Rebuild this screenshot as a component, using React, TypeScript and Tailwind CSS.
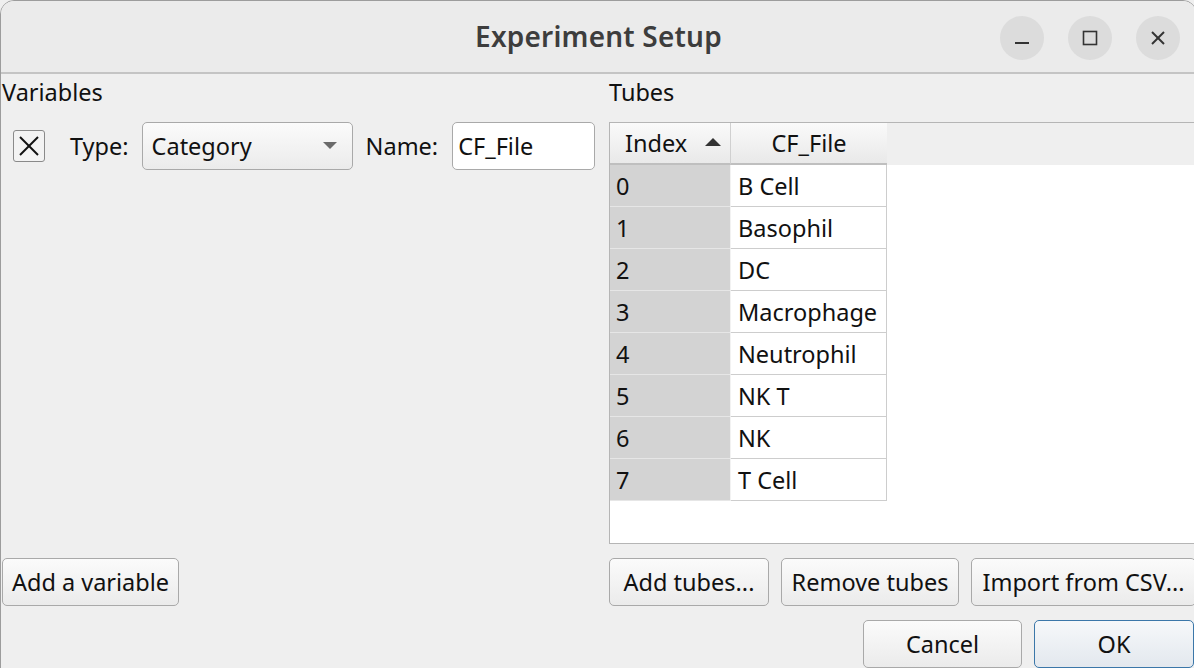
import React from 'react';

const tubes = ['B Cell', 'Basophil', 'DC', 'Macrophage', 'Neutrophil', 'NK T', 'NK', 'T Cell'];

const btn =
  'h-[48px] pt-[1px] rounded-[5px] border border-[#a9a9a9] bg-gradient-to-b from-[#fbfbfb] to-[#ebebeb] text-[23.5px] text-[#111] flex items-center justify-center';

const WinButton: React.FC<{ children: React.ReactNode }> = ({ children }) => (
  <div className="w-[44px] h-[44px] rounded-full bg-[#dcdcdc] flex items-center justify-center">{children}</div>
);

const App: React.FC = () => (
  <div className="w-[1194px] h-[668px] overflow-hidden bg-[#efefef]" style={{ fontFamily: '"Noto Sans", "DejaVu Sans", sans-serif' }}>
    <div className="w-[1197px] h-[700px] rounded-t-[14px] border border-[#9c9c9c] bg-[#efefef] overflow-hidden">
      {/* title bar */}
      <div className="h-[73px] bg-[#ebebeb] border-b-2 border-[#c4c4c4] relative flex items-center justify-center">
        <span className="text-[28px] font-semibold text-[#3d3d3d] tracking-[0.2px] -mt-[1px]">Experiment Setup</span>
        <div className="absolute right-[16px] top-[15px] flex gap-[24px]">
          <WinButton>
            <svg width="16" height="16" viewBox="0 0 16 16">
              <line x1="1" y1="13" x2="15" y2="13" stroke="#333" strokeWidth="2" />
            </svg>
          </WinButton>
          <WinButton>
            <svg width="16" height="16" viewBox="0 0 16 16">
              <rect x="1.5" y="1.5" width="13" height="13" fill="none" stroke="#333" strokeWidth="1.6" />
            </svg>
          </WinButton>
          <WinButton>
            <svg width="16" height="16" viewBox="0 0 16 16">
              <line x1="2" y1="2" x2="14" y2="14" stroke="#333" strokeWidth="2" />
              <line x1="14" y1="2" x2="2" y2="14" stroke="#333" strokeWidth="2" />
            </svg>
          </WinButton>
        </div>
      </div>

      {/* body */}
      <div className="flex h-[532px] text-[23.5px] text-[#111]">
        {/* variables */}
        <div className="w-[608px] flex flex-col pl-[1px]">
          <div className="h-[32px] leading-[32px] mt-[2px]">Variables</div>
          <div className="mt-[14px] h-[48px] flex items-center">
            <div className="ml-[11px] w-[32px] h-[32px] border border-[#8a8a8a] rounded-[3px] bg-[#f3f3f3] flex items-center justify-center">
              <svg width="24" height="24" viewBox="0 0 24 24">
                <line x1="3" y1="3" x2="21" y2="21" stroke="#111" strokeWidth="2" />
                <line x1="21" y1="3" x2="3" y2="21" stroke="#111" strokeWidth="2" />
              </svg>
            </div>
            <span className="ml-[25px] pt-[2px]">Type:</span>
            <div className="ml-[13px] w-[211px] h-[48px] rounded-[5px] border border-[#a9a9a9] bg-gradient-to-b from-[#fbfbfb] to-[#ebebeb] flex items-center justify-between pl-[9px] pr-[15px]">
              <span className="pt-[2px]">Category</span>
              <svg width="14" height="8" viewBox="0 0 14 8">
                <polygon points="0,0 14,0 7,7" fill="#6b6b6b" />
              </svg>
            </div>
            <span className="ml-[13px] pt-[2px]">Name:</span>
            <div className="ml-[14px] w-[143px] h-[48px] pt-[2px] rounded-[5px] border border-[#a9a9a9] bg-white flex items-center pl-[5px]">CF_File</div>
          </div>
          <div className="flex-1" />
          <div className="flex">
            <button className={`${btn} w-[177px]`}>Add a variable</button>
          </div>
        </div>

        {/* tubes */}
        <div className="flex-1 flex flex-col">
          <div className="h-[32px] leading-[32px] mt-[2px]">Tubes</div>
          <div className="mt-[14px] flex-1 border border-[#b5b5b5] bg-white">
            <div className="flex h-[42px] bg-[#efefef]">
              <div className="w-[121px] h-[42px] pt-[2px] border-r border-r-[#d0d0d0] border-b-2 border-b-[#bfbfbf] bg-gradient-to-b from-[#fafafa] to-[#e9e9e9] flex items-center pl-[15px] pr-[9px] justify-between">
                <span>Index</span>
                <svg width="16" height="9" viewBox="0 0 16 9" className="-mt-[4px]">
                  <polygon points="0,8 16,8 8,0" fill="#333" />
                </svg>
              </div>
              <div className="w-[156px] h-[42px] pt-[2px] border-b-2 border-b-[#bfbfbf] bg-gradient-to-b from-[#fafafa] to-[#e9e9e9] flex items-center justify-center">
                CF_File
              </div>
            </div>
            {tubes.map((t, i) => (
              <div key={t} className="flex h-[42px]">
                <div className="w-[121px] pt-[2px] bg-[#d3d3d3] border-b border-b-[#e6e6e6] border-r border-r-[#f2f2f2] flex items-center pl-[6px]">{i}</div>
                <div className="w-[156px] pt-[2px] border-b border-r border-[#cdcdcd] flex items-center pl-[7px]">{t}</div>
              </div>
            ))}
          </div>
          <div className="mt-[14px] flex gap-[12px]">
            <button className={`${btn} w-[160px]`}>Add tubes...</button>
            <button className={`${btn} w-[178px]`}>Remove tubes</button>
            <button className={`${btn} w-[225px]`}>Import from CSV...</button>
          </div>
        </div>
      </div>

      {/* dialog buttons */}
      <div className="mt-[14px] flex justify-end gap-[12px] pr-[2px]">
        <button className={`${btn} w-[159px]`}>Cancel</button>
        <button className="w-[160px] h-[48px] pt-[1px] rounded-[5px] border border-[#3b77a9] bg-gradient-to-b from-[#f6f8fa] to-[#e3e8ee] text-[23.5px] text-[#111] flex items-center justify-center">OK</button>
      </div>
    </div>
  </div>
);

export default App;
